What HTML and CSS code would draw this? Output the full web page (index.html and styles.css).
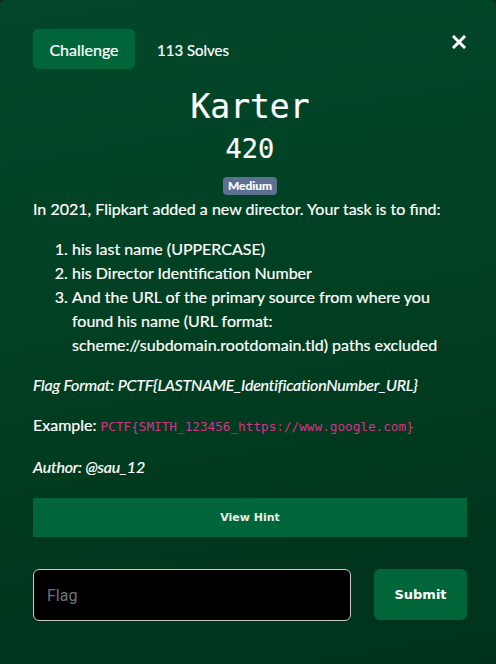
FILE: index.html
```html
<!DOCTYPE html>
<html>
<head>
<meta charset="utf-8">
<link rel="stylesheet" href="styles.css">
</head>
<body>
<div class="modal">
  <div class="top">
    <div class="tab">Challenge</div>
    <div class="solves">113 Solves</div>
    <div class="close">
      <svg width="14" height="14" viewBox="0 0 14 14"><path d="M2 2 L12 12 M12 2 L2 12" stroke="#fff" stroke-width="3" stroke-linecap="square"/></svg>
    </div>
  </div>
  <div class="head">
    <h1 class="name">Karter</h1>
    <div class="points">420</div>
    <span class="badge">Medium</span>
  </div>
  <div class="desc">
    <p>In 2021, Flipkart added a new director. Your task is to find:</p>
    <ol>
      <li>his last name (UPPERCASE)</li>
      <li>his Director Identification Number</li>
      <li>And the URL of the primary source from where you found his name (URL format: scheme://subdomain.rootdomain.tld) paths excluded</li>
    </ol>
    <p><em>Flag Format: PCTF{LASTNAME_IdentificationNumber_URL}</em></p>
    <p>Example: <code>PCTF{SMITH_123456_https://www.google.com}</code></p>
    <p><em>Author: @sau_12</em></p>
  </div>
  <div class="hint">View Hint</div>
  <div class="submit-row">
    <div class="flag">Flag</div>
    <div class="submit">Submit</div>
  </div>
</div>
</body>
</html>
```
FILE: styles.css
```css
html, body {
  margin: 0;
  padding: 0;
  background: #0b2a1a;
}
.modal {
  width: 496px;
  height: 664px;
  box-sizing: border-box;
  border-radius: 6px;
  background: linear-gradient(170deg, #02472a 0%, #014022 45%, #00341c 85%, #00331b 100%);
  padding: 29px 29px 0 33px;
  font-family: Lato, "Noto Sans", sans-serif;
  color: #fff;
  overflow: hidden;
  -webkit-text-stroke: 0.2px currentColor;
}
.top {
  display: flex;
  align-items: center;
  height: 40px;
}
.tab {
  background: #00663a;
  border-radius: 5px;
  height: 40px;
  width: 102px;
  display: flex;
  align-items: center;
  justify-content: center;
  font-size: 16px;
}
.solves {
  margin-left: 22px;
  font-size: 15px;
  padding-top: 1px;
}
.close {
  margin-left: auto;
  margin-right: 1px;
  margin-top: -14px;
  display: flex;
}
.head {
  display: flex;
  flex-direction: column;
  align-items: center;
  margin-top: 18px;
}
.name {
  margin: 0;
  font-family: "DejaVu Sans Mono", monospace;
  font-weight: normal;
  font-size: 33px;
  line-height: 40px;
}
.points {
  font-family: "DejaVu Sans Mono", monospace;
  font-size: 27px;
  line-height: 32px;
  margin-top: 6px;
}
.badge {
  margin-top: 12px;
  background: #5e7090;
  border-radius: 4px;
  font-size: 12px;
  font-weight: bold;
  line-height: 18px;
  padding: 0 5px;
  height: 18px;
}
.desc {
  margin-top: 2px;
  font-size: 16px;
  line-height: 24px;
}
.desc p {
  margin: 0 0 16px 0;
}
.desc ol {
  margin: 0 0 16px 0;
  padding-left: 39px;
}
.desc em {
  letter-spacing: -0.2px;
}
code {
  font-family: "DejaVu Sans Mono", monospace;
  font-size: 12.7px;
  color: #d63384;
  -webkit-text-stroke: 0;
}
.hint {
  margin-top: 19px;
  background: #00663a;
  height: 39px;
  display: flex;
  align-items: center;
  justify-content: center;
  font-family: "DejaVu Sans", sans-serif;
  font-weight: bold;
  font-size: 11px;
  color: #e8eee9;
  -webkit-text-stroke: 0;
}
.submit-row {
  display: flex;
  margin-top: 32px;
  gap: 23px;
}
.flag {
  width: 318px;
  height: 52px;
  box-sizing: border-box;
  background: #000;
  border: 1px solid #c8c8c8;
  border-radius: 6px;
  display: flex;
  align-items: center;
  padding-left: 13px;
  font-family: Roboto, sans-serif;
  font-size: 16px;
  color: #6c757d;
  -webkit-text-stroke: 0;
}
.submit {
  flex: 1;
  height: 51px;
  background: #00663a;
  border-radius: 6px;
  display: flex;
  align-items: center;
  justify-content: center;
  font-family: "DejaVu Sans", sans-serif;
  font-weight: bold;
  font-size: 13px;
  -webkit-text-stroke: 0;
}
```
